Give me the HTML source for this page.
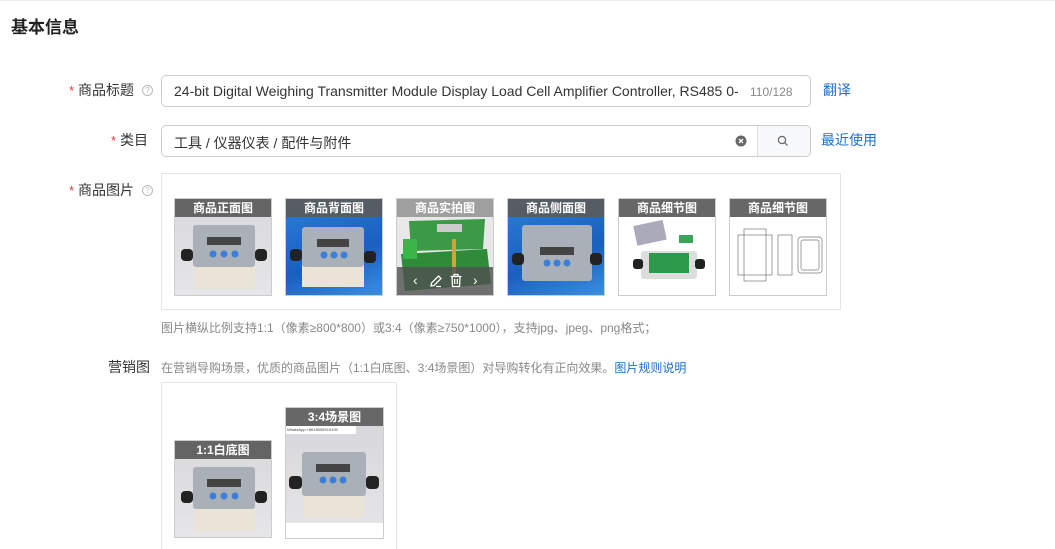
<!DOCTYPE html>
<html><head><meta charset="utf-8"><style>
*{margin:0;padding:0;box-sizing:border-box}
html,body{width:1055px;height:549px;overflow:hidden}
body{background:#fff;font-family:"Liberation Sans","Noto Sans CJK SC",sans-serif;color:#333;position:relative}
.a{position:absolute}
.lbl{font-size:14px;color:#333;text-align:right;white-space:nowrap}
.lbl i{color:#e4393c;font-style:normal;margin-right:4px;font-size:13px}
.help{width:11px;height:11px;border:1px solid #bbb;border-radius:50%;font-size:8px;color:#bbb;text-align:center;line-height:9px}
.inp{border:1px solid #ccc;border-radius:5px;background:#fff}
.th{width:98px;height:98px;border:1px solid #ccc;overflow:hidden}
.hd{position:absolute;left:0;top:0;right:0;height:18px;background:rgba(90,90,90,.92);color:#fff;font-size:12px;font-weight:bold;text-align:center;line-height:18px}
.blue{color:#1e6fd0}
</style></head><body>
<div class="a" style="left:0;top:0;width:1055px;height:1px;background:#eee"></div>
<div class="a" style="left:11px;top:13px;font-size:17px;color:#222;font-weight:bold">基本信息</div>

<div class="a lbl" style="left:60px;top:80px;width:74px"><i>*</i>商品标题</div>
<div class="a help" style="left:142px;top:85px">?</div>
<div class="a inp" style="left:161px;top:75px;width:650px;height:32px"></div>
<div class="a" style="left:174px;top:83px;font-size:14px;color:#333;white-space:nowrap">24-bit Digital Weighing Transmitter Module Display Load Cell Amplifier Controller, RS485 0-</div>
<div class="a" style="left:750px;top:85px;font-size:12px;color:#888">110/128</div>
<div class="a blue" style="left:823px;top:80px;font-size:14px">翻译</div>

<div class="a lbl" style="left:60px;top:130px;width:88px"><i>*</i>类目</div>
<div class="a inp" style="left:161px;top:125px;width:650px;height:32px"></div>
<div class="a" style="left:757px;top:126px;width:53px;height:30px;background:#f7f8fa;border-left:1px solid #ddd;border-radius:0 5px 5px 0"></div>
<svg class="a" style="left:777px;top:135px" width="12" height="12" viewBox="0 0 12 12"><circle cx="5" cy="5" r="3.6" fill="none" stroke="#666" stroke-width="1.2"/><path d="M7.7 7.7L10.5 10.5" stroke="#666" stroke-width="1.2"/></svg>
<svg class="a" style="left:735px;top:135px" width="12" height="12" viewBox="0 0 12 12"><circle cx="6" cy="6" r="5.5" fill="#666"/><path d="M4 4L8 8M8 4L4 8" stroke="#fff" stroke-width="1.3"/></svg>
<div class="a" style="left:174px;top:133px;font-size:14px;color:#333">工具 / 仪器仪表 / 配件与附件</div>
<div class="a blue" style="left:821px;top:130px;font-size:14px">最近使用</div>

<div class="a lbl" style="left:60px;top:180px;width:74px"><i>*</i>商品图片</div>
<div class="a help" style="left:142px;top:185px">?</div>
<div class="a" style="left:161px;top:173px;width:680px;height:137px;border:1px solid #e5e5e5"></div>

<div class="a th" style="left:174px;top:198px;background:linear-gradient(#d8d8da,#e6e6e8)">
<svg width="98" height="98" viewBox="0 0 98 98"><rect x="20" y="60" width="60" height="30" fill="#e9e4d6"/><rect x="18" y="26" width="62" height="42" rx="3" fill="#a9b0b7"/><rect x="32" y="38" width="34" height="8" fill="#444"/><circle cx="38" cy="55" r="3.5" fill="#3d7fd6"/><circle cx="49" cy="55" r="3.5" fill="#3d7fd6"/><circle cx="60" cy="55" r="3.5" fill="#3d7fd6"/><rect x="6" y="50" width="12" height="12" rx="4" fill="#222"/><rect x="80" y="50" width="12" height="12" rx="4" fill="#222"/></svg>
<div class="hd">商品正面图</div></div>

<div class="a th" style="left:285px;top:198px;background:linear-gradient(160deg,#2b7fd8,#1b5fbe 60%,#3b8ee0)">
<svg width="98" height="98" viewBox="0 0 98 98"><rect x="16" y="62" width="62" height="26" fill="#e9e4d6"/><rect x="16" y="28" width="62" height="40" rx="3" fill="#a9b0b7"/><rect x="31" y="40" width="32" height="8" fill="#444"/><circle cx="38" cy="56" r="3.5" fill="#3d7fd6"/><circle cx="48" cy="56" r="3.5" fill="#3d7fd6"/><circle cx="58" cy="56" r="3.5" fill="#3d7fd6"/><rect x="4" y="50" width="12" height="12" rx="4" fill="#222"/><rect x="78" y="52" width="12" height="12" rx="4" fill="#222"/></svg>
<div class="hd">商品背面图</div></div>

<div class="a th" style="left:396px;top:198px;background:#e8e8e8">
<svg width="98" height="98" viewBox="0 0 98 98"><polygon points="4,55 90,50 94,85 8,92" fill="#2f8a3a"/><polygon points="12,22 88,20 86,50 14,52" fill="#3a9a45"/><rect x="40" y="25" width="25" height="8" fill="#ccc"/><rect x="6" y="40" width="14" height="20" fill="#39b54a"/><rect x="55" y="40" width="4" height="40" fill="#c9a83a"/></svg>
<div class="hd" style="background:rgba(110,110,110,.6)">商品实拍图</div>
<div style="position:absolute;left:0;bottom:0;width:98px;height:28px;background:rgba(80,80,80,.8);color:#fff;font-size:14px">
<span style="position:absolute;left:16px;top:5px">‹</span>
<svg style="position:absolute;left:32px;top:7px" width="14" height="14" viewBox="0 0 14 14"><path d="M2 12L2.5 9L9.5 2L12 4.5L5 11.5Z" fill="none" stroke="#fff" stroke-width="1.3"/><path d="M7 12.5H12" stroke="#fff" stroke-width="1.2"/></svg>
<svg style="position:absolute;left:52px;top:6px" width="14" height="15" viewBox="0 0 14 15"><path d="M1.5 3.5H12.5M5 3.5V1.5H9V3.5M3 3.5L3.5 13.5H10.5L11 3.5M5.7 6V11M8.3 6V11" fill="none" stroke="#fff" stroke-width="1.3"/></svg>
<span style="position:absolute;left:76px;top:5px">›</span></div></div>

<div class="a th" style="left:507px;top:198px;background:linear-gradient(160deg,#2b7fd8,#1b5fbe 60%,#3b8ee0)">
<svg width="98" height="98" viewBox="0 0 98 98"><rect x="14" y="26" width="70" height="56" rx="3" fill="#a9b0b7"/><rect x="32" y="48" width="34" height="8" fill="#444"/><circle cx="39" cy="64" r="3.5" fill="#3d7fd6"/><circle cx="49" cy="64" r="3.5" fill="#3d7fd6"/><circle cx="59" cy="64" r="3.5" fill="#3d7fd6"/><rect x="4" y="54" width="12" height="12" rx="4" fill="#222"/><rect x="82" y="54" width="12" height="12" rx="4" fill="#222"/></svg>
<div class="hd">商品侧面图</div></div>

<div class="a th" style="left:618px;top:198px;background:#fff">
<svg width="98" height="98" viewBox="0 0 98 98"><rect x="16" y="24" width="30" height="20" fill="#aab" transform="rotate(-12 30 34)"/><rect x="22" y="52" width="56" height="28" rx="3" fill="#ddd"/><rect x="30" y="54" width="40" height="20" fill="#2c9a4a"/><rect x="14" y="60" width="10" height="10" rx="3" fill="#222"/><rect x="76" y="60" width="10" height="10" rx="3" fill="#222"/><rect x="60" y="36" width="14" height="8" fill="#3aa55a"/></svg>
<div class="hd">商品细节图</div></div>

<div class="a th" style="left:729px;top:198px;background:#fff">
<svg width="98" height="98" viewBox="0 0 98 98" fill="none" stroke="#777" stroke-width=".7"><rect x="8" y="36" width="34" height="40"/><rect x="14" y="30" width="22" height="52"/><rect x="48" y="36" width="14" height="40"/><rect x="68" y="38" width="24" height="36" rx="3"/><rect x="71" y="41" width="18" height="30" rx="2"/></svg>
<div class="hd">商品细节图</div></div>

<div class="a" style="left:161px;top:319px;font-size:12px;color:#888">图片横纵比例支持1:1（像素≥800*800）或3:4（像素≥750*1000），支持jpg、jpeg、png格式；</div>

<div class="a" style="left:108px;top:357px;font-size:14px;color:#333">营销图</div>
<div class="a" style="left:161px;top:359px;font-size:12px;color:#888">在营销导购场景，优质的商品图片（1:1白底图、3:4场景图）对导购转化有正向效果。<span class="blue">图片规则说明</span></div>
<div class="a" style="left:161px;top:382px;width:236px;height:180px;border:1px solid #e5e5e5"></div>

<div class="a th" style="left:174px;top:440px;background:linear-gradient(#d8d8da,#e6e6e8)">
<svg width="98" height="98" viewBox="0 0 98 98"><rect x="20" y="60" width="60" height="30" fill="#e9e4d6"/><rect x="18" y="26" width="62" height="42" rx="3" fill="#a9b0b7"/><rect x="32" y="38" width="34" height="8" fill="#444"/><circle cx="38" cy="55" r="3.5" fill="#3d7fd6"/><circle cx="49" cy="55" r="3.5" fill="#3d7fd6"/><circle cx="60" cy="55" r="3.5" fill="#3d7fd6"/><rect x="6" y="50" width="12" height="12" rx="4" fill="#222"/><rect x="80" y="50" width="12" height="12" rx="4" fill="#222"/></svg>
<div class="hd">1:1白底图</div></div>

<div class="a" style="left:285px;top:407px;width:99px;height:132px;border:1px solid #ccc;background:#fff;overflow:hidden">
<div style="position:absolute;left:0;top:18px;width:97px;height:97px;background:linear-gradient(#d8d8da,#e4e4e6)">
<div style="font-size:4px;color:#444;background:#fff;height:8px;width:70px;padding:1px">WhatsApp:+8618056919190</div>
<svg width="97" height="89" viewBox="0 0 97 89"><rect x="18" y="55" width="60" height="28" fill="#e9e4d6"/><rect x="16" y="18" width="64" height="44" rx="3" fill="#a9b0b7"/><rect x="30" y="30" width="34" height="8" fill="#444"/><circle cx="37" cy="46" r="3.5" fill="#3d7fd6"/><circle cx="47" cy="46" r="3.5" fill="#3d7fd6"/><circle cx="57" cy="46" r="3.5" fill="#3d7fd6"/><rect x="3" y="42" width="13" height="13" rx="4" fill="#222"/><rect x="80" y="42" width="13" height="13" rx="4" fill="#222"/></svg></div>
<div class="hd">3:4场景图</div></div>
</body></html>
